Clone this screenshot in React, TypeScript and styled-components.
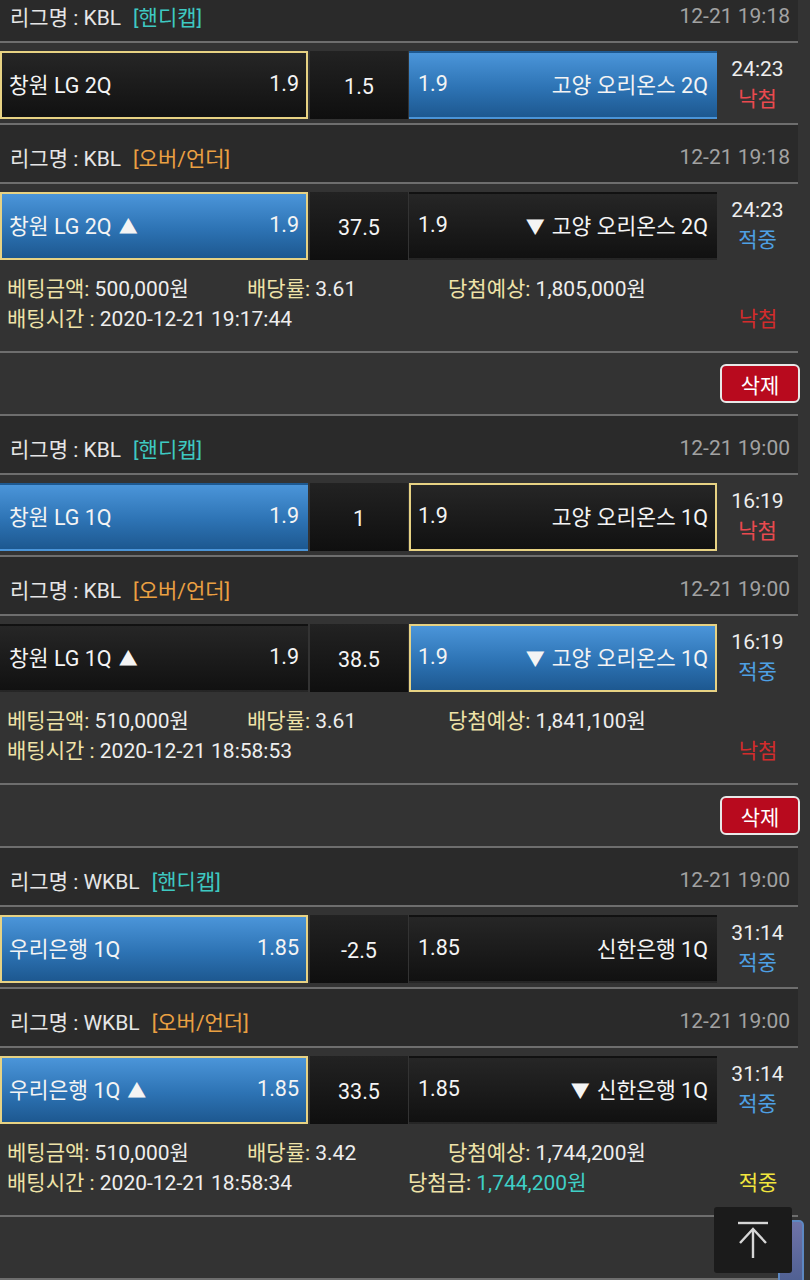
import React from "react"
import styled, { createGlobalStyle, css } from "styled-components"

const GlobalStyle = createGlobalStyle`
  html, body {
    margin: 0;
    padding: 0;
    background: #333333;
    overflow: hidden;
  }
  body {
    font-family: Roboto, "Noto Sans CJK KR", sans-serif;
    color: #eeeeee;
  }
`

const Page = styled.div`
  width: 810px;
  height: 1280px;
  overflow: hidden;
  position: relative;
  background: #333333;
`

const List = styled.div`
  width: 798px;
  margin-top: -16px;
`

const Game = styled.div`
  border-bottom: 2px solid #6e6e6e;
`

const Header = styled.div`
  height: 57px;
  padding: 6px 8px 0 10px;
  box-sizing: border-box;
  background: #2a2a2a;
  display: flex;
  align-items: center;
  justify-content: space-between;
  font-size: 21px;
  color: #e6e6e6;
`

const HeaderRule = styled.div`
  height: 2px;
  background: #6e6e6e;
`

const Tag = styled.span<{ $kind: "handicap" | "ou" }>`
  margin-left: 12px;
  color: ${(p) => (p.$kind === "handicap" ? "#3ec9c2" : "#eaa042")};
`

const Stamp = styled.span`
  color: #a2a2a2;
`

const BetRow = styled.div`
  height: 80px;
  box-sizing: border-box;
  padding: 8px 0 4px;
  display: flex;
`

const cellBase = css`
  height: 68px;
  box-sizing: border-box;
  display: flex;
  align-items: center;
  font-size: 21.5px;
  color: #f4f4f4;
  white-space: nowrap;
`

const Pick = styled.div<{ $blue?: boolean; $picked?: boolean }>`
  ${cellBase}
  width: 308px;
  justify-content: space-between;
  padding: 0 7px 3px 7px;
  background: ${(p) =>
    p.$blue
      ? "linear-gradient(#4b95d9, #2d73b4 55%, #1d5890)"
      : "linear-gradient(#262626, #111111)"};
  border: 2px solid ${(p) => (p.$picked ? "#e7d283" : "transparent")};
`

const Arrow = styled.span<{ $side: "left" | "right" }>`
  font-size: 19px;
  margin: ${(p) => (p.$side === "left" ? "0 0 0 7px" : "0 7px 0 0")};
`

const Line = styled.div`
  ${cellBase}
  width: 98px;
  margin: 0 1px 0 2px;
  justify-content: center;
  padding-top: 3px;
  background: linear-gradient(#222222, #0f0f0f);
`

const Clock = styled.div`
  flex: 1;
  display: flex;
  flex-direction: column;
  align-items: center;
  padding-top: 3px;
  font-size: 21px;
  line-height: 30px;
`

const Result = styled.span<{ $won: boolean }>`
  color: ${(p) => (p.$won ? "#4ea0e4" : "#ea4a4f")};
`

const Info = styled.div`
  padding: 10px 0 17px 7px;
  font-size: 21px;
  line-height: 30px;
`

const InfoLine = styled.div`
  display: grid;
  grid-template-columns: 240px 201px 1fr 80px;
`

const Label = styled.span`
  color: #efe3a8;
`

const Value = styled.span<{ $teal?: boolean }>`
  color: ${(p) => (p.$teal ? "#3fcfc6" : "#eeeeee")};
`

const Cell = styled.span<{ $shift?: number }>`
  margin-left: ${(p) => p.$shift || 0}px;
  white-space: nowrap;
`

const Verdict = styled.span<{ $won: boolean }>`
  text-align: center;
  color: ${(p) => (p.$won ? "#f1e63e" : "#d22c2c")};
`

const Actions = styled.div`
  height: 50px;
  padding-top: 11px;
  display: flex;
  justify-content: flex-end;
  border-bottom: 2px solid #6e6e6e;
`

const DeleteButton = styled.button`
  width: 80px;
  height: 39px;
  margin-right: -2px;
  border: 2px solid #e8e8e8;
  border-radius: 6px;
  background: #b80a1e;
  color: #ffffff;
  font-family: inherit;
  font-size: 21px;
  padding: 0;
`

const ChatTab = styled.div`
  position: absolute;
  left: 778px;
  top: 1220px;
  width: 22px;
  height: 70px;
  border-radius: 5px;
  background: linear-gradient(#6f73a8, #4a5d8f);
  border: 2px solid #5d88c2;
`

const TopButton = styled.div`
  position: absolute;
  left: 714px;
  top: 1207px;
  width: 78px;
  height: 66px;
  border-radius: 3px;
  background: #1b1b1b;
  display: flex;
  align-items: center;
  justify-content: center;
`

type Bet = {
  league: string
  kind: "handicap" | "ou"
  stamp: string
  home: string
  away: string
  homeOdds: string
  awayOdds: string
  line: string
  blue: "home" | "away"
  picked: "home" | "away"
  clock: string
  won: boolean
}

type Slip = {
  bets: Bet[]
  amount: string
  rate: string
  expect: string
  placed: string
  payout?: string
  won: boolean
  removable: boolean
}

const slips: Slip[] = [
  {
    bets: [
      { league: "KBL", kind: "handicap", stamp: "12-21 19:18", home: "창원 LG 2Q", away: "고양 오리온스 2Q", homeOdds: "1.9", awayOdds: "1.9", line: "1.5", blue: "away", picked: "home", clock: "24:23", won: false },
      { league: "KBL", kind: "ou", stamp: "12-21 19:18", home: "창원 LG 2Q", away: "고양 오리온스 2Q", homeOdds: "1.9", awayOdds: "1.9", line: "37.5", blue: "home", picked: "home", clock: "24:23", won: true },
    ],
    amount: "500,000원", rate: "3.61", expect: "1,805,000원", placed: "2020-12-21 19:17:44", won: false, removable: true,
  },
  {
    bets: [
      { league: "KBL", kind: "handicap", stamp: "12-21 19:00", home: "창원 LG 1Q", away: "고양 오리온스 1Q", homeOdds: "1.9", awayOdds: "1.9", line: "1", blue: "home", picked: "away", clock: "16:19", won: false },
      { league: "KBL", kind: "ou", stamp: "12-21 19:00", home: "창원 LG 1Q", away: "고양 오리온스 1Q", homeOdds: "1.9", awayOdds: "1.9", line: "38.5", blue: "away", picked: "away", clock: "16:19", won: true },
    ],
    amount: "510,000원", rate: "3.61", expect: "1,841,100원", placed: "2020-12-21 18:58:53", won: false, removable: true,
  },
  {
    bets: [
      { league: "WKBL", kind: "handicap", stamp: "12-21 19:00", home: "우리은행 1Q", away: "신한은행 1Q", homeOdds: "1.85", awayOdds: "1.85", line: "-2.5", blue: "home", picked: "home", clock: "31:14", won: true },
      { league: "WKBL", kind: "ou", stamp: "12-21 19:00", home: "우리은행 1Q", away: "신한은행 1Q", homeOdds: "1.85", awayOdds: "1.85", line: "33.5", blue: "home", picked: "home", clock: "31:14", won: true },
    ],
    amount: "510,000원", rate: "3.42", expect: "1,744,200원", placed: "2020-12-21 18:58:34", payout: "1,744,200원", won: true, removable: false,
  },
]

const BetGame = ({ bet, children }: { bet: Bet; children?: React.ReactNode }) => {
  const ou = bet.kind === "ou"
  return (
    <Game>
      <Header>
        <span>
          리그명 : {bet.league}
          <Tag $kind={bet.kind}>{ou ? "[오버/언더]" : "[핸디캡]"}</Tag>
        </span>
        <Stamp>{bet.stamp}</Stamp>
      </Header>
      <HeaderRule />
      <BetRow>
        <Pick $blue={bet.blue === "home"} $picked={bet.picked === "home"}>
          <span>
            {bet.home}
            {ou && <Arrow $side="left">▲</Arrow>}
          </span>
          <span>{bet.homeOdds}</span>
        </Pick>
        <Line>{bet.line}</Line>
        <Pick $blue={bet.blue === "away"} $picked={bet.picked === "away"}>
          <span>{bet.awayOdds}</span>
          <span>
            {ou && <Arrow $side="right">▼</Arrow>}
            {bet.away}
          </span>
        </Pick>
        <Clock>
          <span>{bet.clock}</span>
          <Result $won={bet.won}>{bet.won ? "적중" : "낙첨"}</Result>
        </Clock>
      </BetRow>
      {children}
    </Game>
  )
}

const ArrowUp = () => (
  <svg width="36" height="40" viewBox="0 0 36 40" fill="none" stroke="#d6d6d6" strokeWidth="2.4">
    <line x1="3" y1="3" x2="33" y2="3" />
    <line x1="18" y1="9" x2="18" y2="38" />
    <polyline points="5,23 18,9 31,23" />
  </svg>
)

export default function App() {
  return (
    <Page>
      <GlobalStyle />
      <List>
        {slips.map((slip, i) => (
          <React.Fragment key={i}>
            <BetGame bet={slip.bets[0]} />
            <BetGame bet={slip.bets[1]}>
              <Info>
                <InfoLine>
                  <Cell><Label>베팅금액:</Label> <Value>{slip.amount}</Value></Cell>
                  <Cell><Label>배당률:</Label> <Value>{slip.rate}</Value></Cell>
                  <Cell><Label>당첨예상:</Label> <Value>{slip.expect}</Value></Cell>
                  <span />
                </InfoLine>
                <InfoLine>
                  <Cell><Label>배팅시간 :</Label> <Value>{slip.placed}</Value></Cell>
                  <span />
                  <Cell $shift={-40}>
                    {slip.payout && (
                      <>
                        <Label>당첨금:</Label> <Value $teal>{slip.payout}</Value>
                      </>
                    )}
                  </Cell>
                  <Verdict $won={slip.won}>{slip.won ? "적중" : "낙첨"}</Verdict>
                </InfoLine>
              </Info>
            </BetGame>
            <Actions>{slip.removable && <DeleteButton>삭제</DeleteButton>}</Actions>
          </React.Fragment>
        ))}
      </List>
      <ChatTab />
      <TopButton>
        <ArrowUp />
      </TopButton>
    </Page>
  )
}
